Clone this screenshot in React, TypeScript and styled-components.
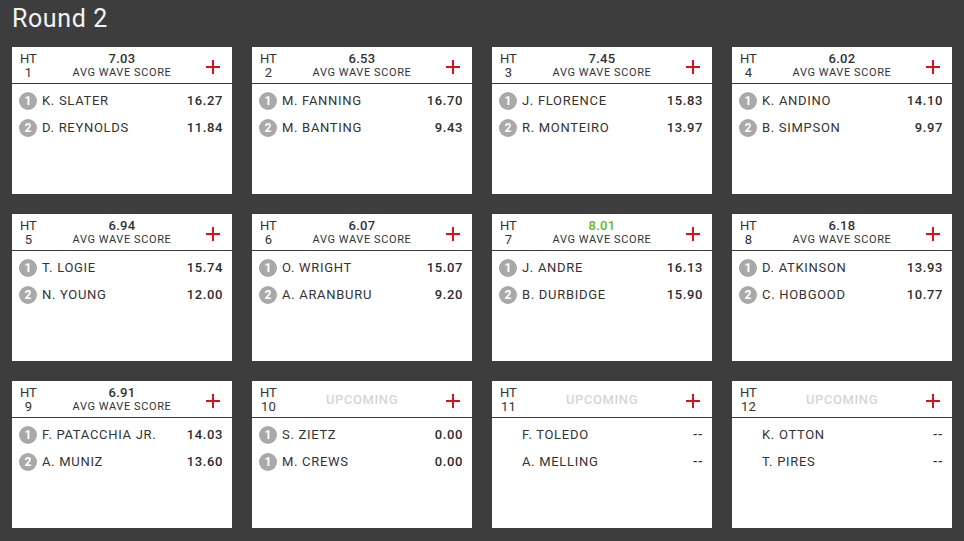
import React from "react";
import styled, { createGlobalStyle } from "styled-components";

const Global = createGlobalStyle`
  html, body { margin: 0; padding: 0; background: #3d3d3d; }
  body { font-family: Roboto, "Liberation Sans", Arial, sans-serif; }
`;

const Page = styled.div`
  padding: 5px 12px 13px 12px;
  background: #3d3d3d;
  min-height: 541px;
  box-sizing: border-box;
`;

const Title = styled.h1`
  margin: 0 0 14px 0;
  font-size: 25px;
  line-height: 28px;
  font-weight: 400;
  letter-spacing: 0.6px;
  color: #f2f2f2;
`;

const Grid = styled.div`
  display: grid;
  grid-template-columns: repeat(4, 220px);
  grid-auto-rows: 147px;
  gap: 20px;
`;

const Card = styled.div`
  background: #fff;
  display: flex;
  flex-direction: column;
  color: #333;
`;

const Header = styled.div`
  height: 37px;
  box-sizing: border-box;
  border-bottom: 1px solid #3a3a3a;
  display: grid;
  grid-template-columns: 40px 1fr 40px;
  align-items: start;
  padding: 5px 0 0 0;
`;

const Heat = styled.div`
  justify-self: start;
  margin-left: 8px;
  font-size: 13px;
  line-height: 14px;
  text-align: center;
  color: #333;
`;

const Center = styled.div`
  text-align: center;
`;

const Avg = styled.div<{ $green?: boolean }>`
  font-size: 13px;
  line-height: 14px;
  font-weight: 500;
  letter-spacing: 0.3px;
  color: ${(p) => (p.$green ? "#62bb0e" : "#333")};
`;

const AvgLabel = styled.div`
  font-size: 11px;
  line-height: 14px;
  letter-spacing: 0.6px;
  color: #333;
`;

const Upcoming = styled.div`
  font-size: 13px;
  line-height: 27px;
  font-weight: 500;
  letter-spacing: 0.6px;
  color: #d6d6d6;
`;

const PlusWrap = styled.div`
  justify-self: end;
  margin-right: 12px;
  align-self: center;
  margin-top: -4px;
  width: 14px;
  height: 14px;
`;

const Body = styled.div`
  padding: 3px 9px 0 7px;
  display: flex;
  flex-direction: column;
`;

const Row = styled.div`
  height: 27px;
  display: flex;
  align-items: center;
`;

const Badge = styled.span<{ $hidden?: boolean }>`
  width: 18px;
  height: 18px;
  border-radius: 50%;
  background: ${(p) => (p.$hidden ? "transparent" : "#a9a9a9")};
  color: #fff;
  font-size: 12px;
  font-weight: 700;
  display: flex;
  align-items: center;
  justify-content: center;
  margin-right: 5px;
  flex: none;
`;

const Name = styled.span`
  flex: 1;
  font-size: 13px;
  letter-spacing: 0.7px;
  color: #333;
`;

const Score = styled.span`
  font-size: 13px;
  font-weight: 500;
  letter-spacing: 0.6px;
  color: #2e2e2e;
`;

const Plus = () => (
  <svg width="14" height="14" viewBox="0 0 14 14">
    <path d="M7 0v14M0 7h14" stroke="#d6121f" strokeWidth="2" />
  </svg>
);

type P = { pos?: number; name: string; score: string };
type H = { n: number; avg?: string; green?: boolean; players: P[] };

const heats: H[] = [
  { n: 1, avg: "7.03", players: [{ pos: 1, name: "K. SLATER", score: "16.27" }, { pos: 2, name: "D. REYNOLDS", score: "11.84" }] },
  { n: 2, avg: "6.53", players: [{ pos: 1, name: "M. FANNING", score: "16.70" }, { pos: 2, name: "M. BANTING", score: "9.43" }] },
  { n: 3, avg: "7.45", players: [{ pos: 1, name: "J. FLORENCE", score: "15.83" }, { pos: 2, name: "R. MONTEIRO", score: "13.97" }] },
  { n: 4, avg: "6.02", players: [{ pos: 1, name: "K. ANDINO", score: "14.10" }, { pos: 2, name: "B. SIMPSON", score: "9.97" }] },
  { n: 5, avg: "6.94", players: [{ pos: 1, name: "T. LOGIE", score: "15.74" }, { pos: 2, name: "N. YOUNG", score: "12.00" }] },
  { n: 6, avg: "6.07", players: [{ pos: 1, name: "O. WRIGHT", score: "15.07" }, { pos: 2, name: "A. ARANBURU", score: "9.20" }] },
  { n: 7, avg: "8.01", green: true, players: [{ pos: 1, name: "J. ANDRE", score: "16.13" }, { pos: 2, name: "B. DURBIDGE", score: "15.90" }] },
  { n: 8, avg: "6.18", players: [{ pos: 1, name: "D. ATKINSON", score: "13.93" }, { pos: 2, name: "C. HOBGOOD", score: "10.77" }] },
  { n: 9, avg: "6.91", players: [{ pos: 1, name: "F. PATACCHIA JR.", score: "14.03" }, { pos: 2, name: "A. MUNIZ", score: "13.60" }] },
  { n: 10, players: [{ pos: 1, name: "S. ZIETZ", score: "0.00" }, { pos: 1, name: "M. CREWS", score: "0.00" }] },
  { n: 11, players: [{ name: "F. TOLEDO", score: "--" }, { name: "A. MELLING", score: "--" }] },
  { n: 12, players: [{ name: "K. OTTON", score: "--" }, { name: "T. PIRES", score: "--" }] },
];

export default function App() {
  return (
    <>
      <Global />
      <Page>
        <Title>Round 2</Title>
        <Grid>
          {heats.map((h) => (
            <Card key={h.n}>
              <Header>
                <Heat>
                  HT
                  <br />
                  {h.n}
                </Heat>
                <Center>
                  {h.avg ? (
                    <>
                      <Avg $green={h.green}>{h.avg}</Avg>
                      <AvgLabel>AVG WAVE SCORE</AvgLabel>
                    </>
                  ) : (
                    <Upcoming>UPCOMING</Upcoming>
                  )}
                </Center>
                <PlusWrap>
                  <Plus />
                </PlusWrap>
              </Header>
              <Body>
                {h.players.map((p, i) => (
                  <Row key={i}>
                    <Badge $hidden={!p.pos}>{p.pos ?? ""}</Badge>
                    <Name>{p.name}</Name>
                    <Score>{p.score}</Score>
                  </Row>
                ))}
              </Body>
            </Card>
          ))}
        </Grid>
      </Page>
    </>
  );
}
